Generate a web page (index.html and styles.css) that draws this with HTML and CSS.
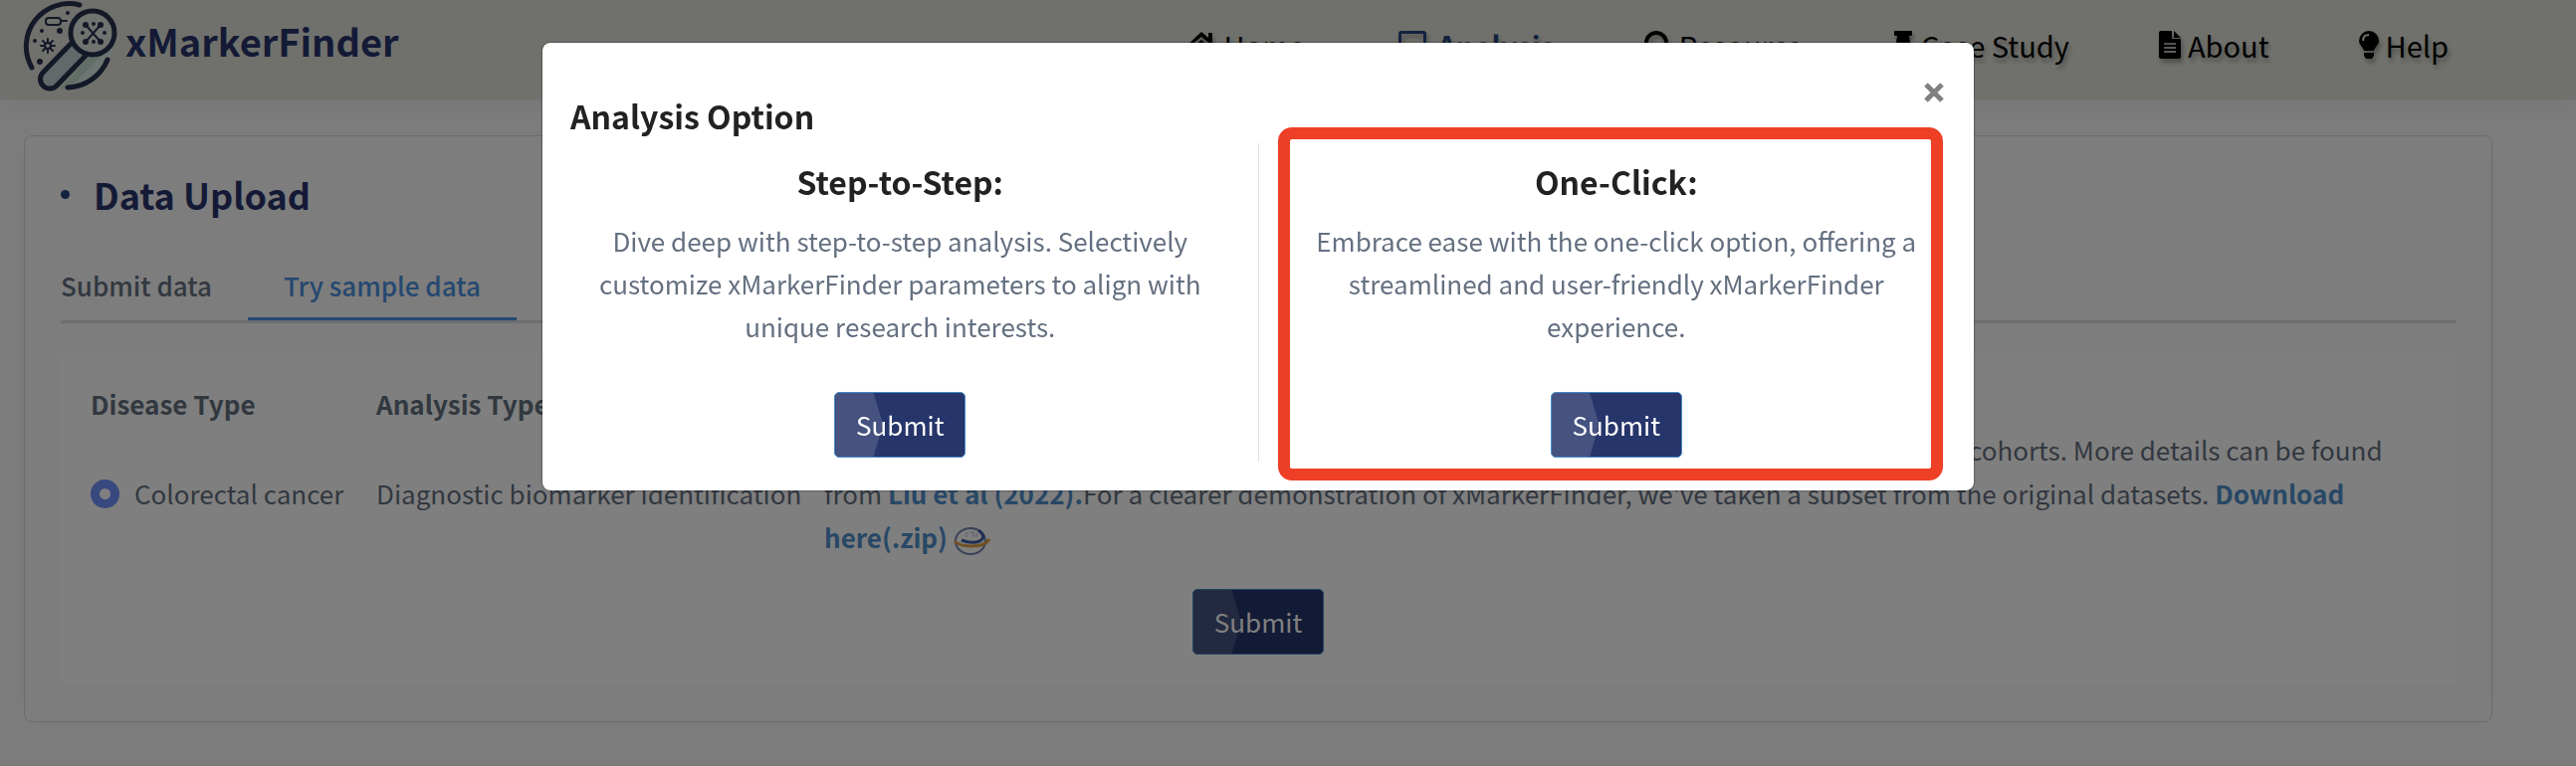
FILE: index.html
```html
<!DOCTYPE html>
<html lang="en">
<head>
    <meta charset="UTF-8">
    <meta name="viewport" content="width=device-width, initial-scale=1.0">
    <title>xMarkerFinder</title>
    <link rel="stylesheet" href="styles.css">
</head>
<body>
    <header class="header">
        <a class="brand" href="#">
            <svg class="brand-logo" viewBox="0 0 86 92" fill="none" stroke="#283250" stroke-linecap="round" aria-hidden="true">
                <path d="M88 46 Q84 88 36 90 L78 44z" fill="#dcebe4" stroke="none"/>
                <path d="M36 90 L66 56 L78 56 L46 88z" fill="#c2dccf" stroke="none"/>
                <path d="M56 5 A43 43 0 0 0 8 68" stroke-width="5"/>
                <path d="M84 60 A45 45 0 0 1 44 88" stroke-width="5"/>
                <path d="M48 43 L19 73 A9 9 0 0 0 33 86 L62 56" fill="#c6d2d4" stroke-width="5"/>
                <circle cx="69" cy="33" r="22" fill="#e1e6de" stroke-width="5"/>
                <path d="M62 25 L77 42 M77 25 L62 42" stroke-width="2"/>
                <g fill="#283250" stroke="none">
                    <circle cx="62" cy="25" r="3"/>
                    <circle cx="77" cy="25" r="3"/>
                    <circle cx="62" cy="42" r="3"/>
                    <circle cx="77" cy="42" r="3"/>
                    <circle cx="70" cy="24" r="2"/>
                    <circle cx="70" cy="42" r="2"/>
                    <circle cx="59" cy="33" r="2"/>
                    <circle cx="81" cy="33" r="2"/>
                    <circle cx="44" cy="13" r="2"/>
                    <circle cx="36" cy="31" r="3"/>
                    <circle cx="18" cy="31" r="2"/>
                    <circle cx="11" cy="41" r="2"/>
                    <circle cx="16" cy="62" r="3"/>
                </g>
                <rect x="22" y="18" width="15" height="7" rx="3" stroke-width="2"/>
                <path d="M38 21 H43" stroke-width="2"/>
                <circle cx="24" cy="46" r="3" stroke-width="2"/>
                <path d="M24 39 V43 M24 49 V53 M17 46 H21 M27 46 H31 M19 41 L22 44 M26 48 L29 51 M29 41 L26 44 M22 48 L19 51" stroke-width="2"/>
            </svg>
            <span>xMarkerFinder</span>
        </a>
        <nav class="nav">
            <a href="#">
                <svg width="32" height="28" viewBox="0 0 32 28" aria-hidden="true"><path d="M16 1 L23 7 V2 H27 V11 L31 15 L29 17 L16 6 L3 17 L1 15z"/><path d="M16 9 L27 18 V28 H19 V20 H13 V28 H5 V18z"/></svg>
                <span>Home</span>
            </a>
            <a class="active" href="#">
                <svg width="36" height="28" viewBox="0 0 36 28" aria-hidden="true"><path d="M7 0 H29 Q32 0 32 3 V20 H29 V3 H7 V20 H4 V3 Q4 0 7 0z"/><path d="M0 22 H36 Q36 28 31 28 H5 Q0 28 0 22z"/></svg>
                <span>Analysis</span>
            </a>
            <a href="#">
                <svg width="28" height="28" viewBox="0 0 28 28" fill="none" aria-hidden="true"><circle class="ring" cx="12" cy="12" r="10"/><path d="M19 19 L26 26" stroke="currentColor" stroke-width="5"/></svg>
                <span>Resource</span>
            </a>
            <a href="#">
                <svg width="22" height="28" viewBox="0 0 22 28" aria-hidden="true"><path d="M3 0 H19 Q20 0 20 1 V4 Q20 5 19 5 H17 L18 12 Q22 14 22 19 H13 V25 L11 28 L9 25 V19 H0 Q0 14 4 12 L5 5 H3 Q2 5 2 4 V1 Q2 0 3 0z"/></svg>
                <span>Case Study</span>
            </a>
            <a href="#">
                <svg width="22" height="28" viewBox="0 0 22 28" aria-hidden="true"><path fill-rule="evenodd" d="M2 0 H13 V8 H22 V26 Q22 28 20 28 H2 Q0 28 0 26 V2 Q0 0 2 0z M5 12 V14 H17 V12z M5 16 V18 H17 V16z M5 20 V22 H17 V20z"/><path d="M15 0 L22 7 H15z"/></svg>
                <span>About</span>
            </a>
            <a href="#">
                <svg width="20" height="28" viewBox="0 0 20 28" aria-hidden="true"><path d="M10 0 A10 10 0 0 1 20 10 C20 14 16 16 15 20 H5 C4 16 0 14 0 10 A10 10 0 0 1 10 0z M5 22 H15 V25 L13 28 H7 L5 25z"/><path d="M4 10 Q4 4 10 4" fill="none" stroke="#e1e2d8" stroke-width="2"/></svg>
                <span>Help</span>
            </a>
        </nav>
    </header>

    <main class="main">
        <section class="card">
            <h2 class="card-title">Data Upload</h2>
            <div class="tabs">
                <a class="tab" href="#">Submit data</a>
                <a class="tab active" href="#">Try sample data</a>
            </div>
            <form class="panel">
                <table class="sample-table">
                    <thead>
                        <tr>
                            <th class="col-disease">Disease Type</th>
                            <th class="col-type">Analysis Type</th>
                            <th>Description</th>
                        </tr>
                    </thead>
                    <tbody>
                        <tr>
                            <td>
                                <label class="radio">
                                    <input type="radio" name="disease" checked>
                                    <span>Colorectal cancer</span>
                                </label>
                            </td>
                            <td>Diagnostic biomarker identification</td>
                            <td>The sample data contain taxonomic profiles of colorectal cancer patients and controls of public cohorts. More details can be found from <a href="#">Liu et al (2022).</a>For a clearer demonstration of xMarkerFinder, we've taken a subset from the original datasets. <a href="#">Download here(.zip)</a>
                                <svg class="zip-icon" viewBox="0 0 38 30" fill="none" aria-hidden="true">
                                    <ellipse cx="17" cy="15" rx="15" ry="13" stroke="#7484b0" stroke-width="2"/>
                                    <path d="M13 6 V11 M17 6 H20 V11 M23 7 V11" stroke="#a8b4d0" stroke-width="1"/>
                                    <path d="M25 4 Q34 11 26 15 Q18 18 8 14" stroke="#3c5ca8" stroke-width="3"/>
                                    <path d="M1 15 Q6 20 18 20 Q32 20 36 13" stroke="#e0a040" stroke-width="3"/>
                                </svg>
                            </td>
                        </tr>
                    </tbody>
                </table>
                <button class="btn" type="button">Submit</button>
            </form>
        </section>
    </main>

    <div class="backdrop">
        <div class="modal" role="dialog" aria-modal="true" aria-labelledby="modalTitle">
            <div class="modal-header">
                <h3 id="modalTitle">Analysis Option</h3>
                <button class="close" type="button" aria-label="Close">
                    <svg width="24" height="24" viewBox="0 0 24 24" aria-hidden="true"><path d="M4 4 L20 20 M20 4 L4 20" stroke="currentColor" stroke-width="5"/></svg>
                </button>
            </div>
            <div class="options">
                <div class="option">
                    <h3>Step-to-Step:</h3>
                    <p>Dive deep with step-to-step analysis. Selectively customize xMarkerFinder parameters to align with unique research interests.</p>
                    <button class="btn" type="button">Submit</button>
                </div>
                <div class="option highlight">
                    <h3>One-Click:</h3>
                    <p>Embrace ease with the one-click option, offering a streamlined and user-friendly xMarkerFinder experience.</p>
                    <button class="btn" type="button">Submit</button>
                </div>
            </div>
        </div>
    </div>
</body>
</html>
```

FILE: styles.css
```css
* {
    box-sizing: border-box;
}

body {
    margin: 0;
    min-height: 100vh;
    font-family: "Noto Sans CJK SC", sans-serif;
    font-size: 26px;
    line-height: 44px;
    color: #647080;
    background: #f9f9f9;
}

h2, h3, p {
    margin: 0;
}

a {
    color: #5090cc;
    font-weight: 700;
    text-decoration: none;
}

/* header */
.header {
    display: flex;
    justify-content: space-between;
    align-items: flex-start;
    height: 100px;
    padding: 0 128px 0 24px;
    background: #e1e2d8;
    box-shadow: 0 2px 30px rgba(0, 0, 0, 0.08);
}

.brand {
    display: flex;
    gap: 16px;
    font-size: 38px;
    line-height: 82px;
    color: #28346c;
}

.brand-logo {
    width: 86px;
    height: 92px;
    overflow: visible;
}

.nav {
    display: flex;
    gap: 90px;
    height: 90px;
}

.nav a {
    display: flex;
    align-items: center;
    gap: 7px;
    font-size: 29px;
    font-weight: 400;
    color: #000;
    text-shadow: 2px 4px 4px rgba(0, 0, 0, 0.3);
}

.nav svg {
    fill: currentColor;
    filter: drop-shadow(2px 4px 2px rgba(0, 0, 0, 0.3));
}

.nav .ring {
    fill: none;
    stroke: currentColor;
    stroke-width: 4px;
}

.nav a.active {
    color: #26447c;
    font-weight: 700;
}

/* upload card */
.main {
    padding: 36px 84px 44px 24px;
}

.card {
    padding: 32px 36px 36px;
    border: 1px solid #d6d6d6;
    border-radius: 8px;
    background: #fbfbfb;
    box-shadow: 0 0 20px rgba(0, 0, 0, 0.02);
}

.card-title {
    display: flex;
    align-items: center;
    gap: 24px;
    margin-bottom: 44px;
    font-size: 36px;
    line-height: 52px;
    color: #28346c;
}

.card-title::before {
    content: '';
    width: 9px;
    height: 9px;
    border-radius: 50%;
    background: #28447c;
}

.tabs {
    display: flex;
    border-bottom: 3px solid #d8dde3;
}

.tab {
    padding: 0 36px 10px;
    border-bottom: 3px solid transparent;
    font-weight: 500;
    color: #647080;
}

.tab:first-child {
    padding-left: 0;
}

.tab.active {
    color: #4a90e0;
    border-color: #4a90e0;
}

.panel {
    margin-top: 29px;
    padding: 30px 30px 31px;
    border-radius: 8px;
    background: #fff;
    text-align: center;
}

.sample-table {
    width: 100%;
    margin-bottom: 28px;
    border-collapse: collapse;
    table-layout: fixed;
    text-align: left;
}

.sample-table th, .sample-table td {
    padding: 0 0 2px;
}

.col-disease {
    width: 287px;
}

.col-type {
    width: 450px;
}

.radio {
    display: flex;
    align-items: center;
    gap: 15px;
}

.radio input {
    appearance: none;
    width: 29px;
    height: 29px;
    margin: 0;
    border: 9px solid #7092ff;
    border-radius: 50%;
    background: #fff;
}

.zip-icon {
    width: 38px;
    height: 30px;
    vertical-align: middle;
}

.btn {
    width: 132px;
    height: 66px;
    border: 1px solid #428bca;
    border-radius: 5px;
    background: #26356a;
    font: inherit;
    color: #fff;
    position: relative;
    overflow: hidden;
}

.btn::before {
    content: '';
    position: absolute;
    top: 0;
    left: 0;
    width: 48px;
    height: 100%;
    background: rgba(255, 255, 255, 0.15);
    clip-path: polygon(0 0, 80% 0, 100% 50%, 80% 100%, 0 100%);
}

/* analysis option dialog */
.backdrop {
    position: fixed;
    top: 0;
    left: 0;
    width: 100%;
    height: 100%;
    padding: 43px 60px 0 0;
    background: rgba(0, 0, 0, 0.5);
}

.modal {
    max-width: 1438px;
    margin: 0 auto;
    padding-bottom: 29px;
    border-radius: 8px;
    background: #fff;
    box-shadow: 0 0 2px rgba(0, 0, 0, 0.8);
}

.modal h3 {
    font-size: 32px;
    line-height: 48px;
    color: #222;
}

.modal-header {
    display: flex;
    justify-content: space-between;
    align-items: flex-start;
    padding: 30px 28px 4px;
}

.modal-header h3 {
    margin-top: 19px;
}

.close {
    display: flex;
    align-items: center;
    justify-content: center;
    width: 24px;
    height: 40px;
    padding: 0;
    border: none;
    background: none;
    color: #808080;
}

.options {
    display: flex;
}

.option {
    flex: 1;
    padding: 14px 50px 4px;
    text-align: center;
    position: relative;
}

.option:first-child {
    border-right: 1px solid #ddd;
}

.option p {
    margin: 14px 0 45px;
    line-height: 43px;
}

.option .btn {
    display: block;
    margin: 0 auto;
}

.highlight::after {
    content: '';
    position: absolute;
    top: -16px;
    right: 31px;
    bottom: -19px;
    left: 19px;
    border: 12px solid #ee4026;
    border-radius: 14px;
    pointer-events: none;
}
```
